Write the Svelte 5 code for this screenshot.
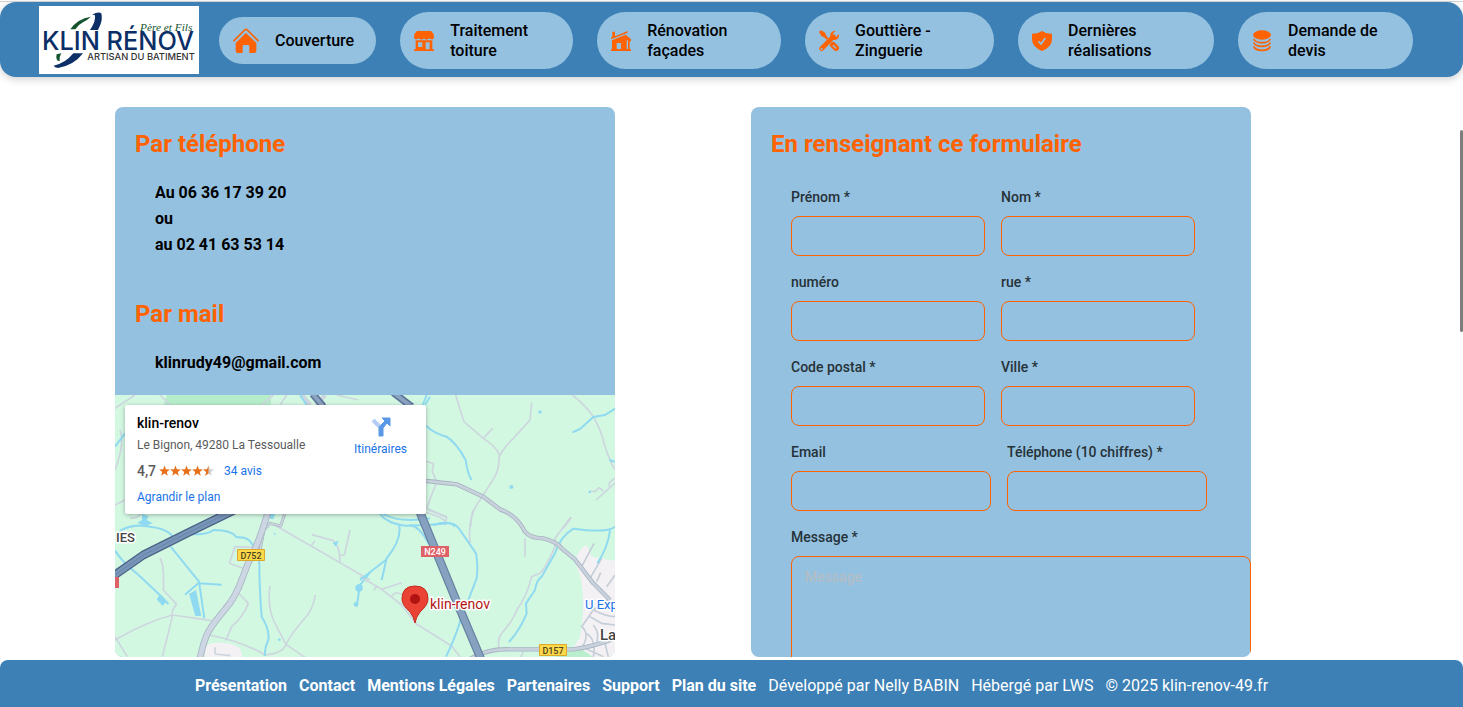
<script>
  const menu = [
    { label: 'Couverture', icon: 'home' },
    { label: 'Traitement toiture', icon: 'store' },
    { label: 'Rénovation façades', icon: 'house' },
    { label: 'Gouttière - Zinguerie', icon: 'tools' },
    { label: 'Dernières réalisations', icon: 'shield' },
    { label: 'Demande de devis', icon: 'coins' }
  ];
  const rows = [
    [{ id: 'prenom', label: 'Prénom *' }, { id: 'nom', label: 'Nom *' }],
    [{ id: 'numero', label: 'numéro' }, { id: 'rue', label: 'rue *' }],
    [{ id: 'cp', label: 'Code postal *' }, { id: 'ville', label: 'Ville *' }],
    [{ id: 'email', label: 'Email', type: 'email' }, { id: 'tel', label: 'Téléphone (10 chiffres) *', type: 'tel' }]
  ];
  const footerLinks = ['Présentation', 'Contact', 'Mentions Légales', 'Partenaires', 'Support', 'Plan du site'];
  const star = 'M6 0l1.5 4.1 4.4.2-3.4 2.7 1.1 4.2L6 8.8l-3.6 2.4 1.1-4.2L.1 4.3l4.4-.2z';
</script>

<div class="page">
  <header>
    <a class="logo" href="#accueil" aria-label="Klin Rénov">
      <svg viewBox="117 18 480 204" width="160" height="68">
        <rect x="117" y="18" width="480" height="204" fill="#fff" />
        <path d="M211 88Q232 56 273 50Q262 60 250 66Q236 73 226 88Z" fill="#14532d" />
        <path d="M277 44Q294 34 304 40Q308 58 301 74L294 90L270 90Q288 64 285 46Z" fill="#0b2f66" />
        <path d="M170 163L184 160Q176 172 179 184L171 181Q167 172 170 163Z" fill="#14532d" />
        <path d="M220 160L249 160Q222 196 174 204Q164 203 161 197Q196 190 220 160Z" fill="#0b2f66" />
        <text x="126" y="150" class="brand">KLIN RÉNOV</text>
        <text x="262" y="179" class="trade">ARTISAN DU BATIMENT</text>
        <text x="420" y="92" class="script">Père et Fils</text>
      </svg>
    </a>
    <nav>
      {#each menu as item}
        <a class="pill" href="#{item.icon}">
          {#if item.icon === 'home'}
            <svg width="26" height="26" viewBox="0 0 78 78">
              <path d="M3 38L35 6q4-4 8 0L75 38" fill="none" stroke="#ff6200" stroke-width="5" stroke-linecap="round" />
              <path d="M39 15L70 45V68q0 7-7 7H49V54q0-3-3-3H32q-3 0-3 3V75H15q-7 0-7-7V45Z" fill="#ff6200" />
            </svg>
          {:else if item.icon === 'store'}
            <svg width="20" height="20" viewBox="0 0 60 60" fill="#ff6200">
              <path d="M9 0H51Q60 7 60 17Q60 25 53 25Q48 25 45 22Q41 26 37 26Q33 26 30 22Q27 26 23 26Q18 26 15 22Q12 25 7 25Q0 25 0 17Q0 7 9 0Z" />
              <path fill-rule="evenodd" d="M5 28H55V55H60V60H0V55H5ZM12 34V48H25V34ZM35 34V55H47V34Z" />
            </svg>
          {:else if item.icon === 'house'}
            <svg width="20" height="20" viewBox="0 0 60 60" fill="#ff6200">
              <path d="M4 2H12V16L50 0V5L1 25V19L4 18Z" />
              <path fill-rule="evenodd" d="M3 28L44 11L60 25V31H56V55H60V60H0V55H3ZM17 36V54H30V36ZM47 28V54H51V28Z" />
            </svg>
          {:else if item.icon === 'tools'}
            <svg width="20" height="22" viewBox="0 0 60 66">
              <path d="M1 5L7 2L18 9L20 16L27 24L23 28L15 20L8 18Z" fill="#ff6200" stroke="#ff6200" stroke-width="2" stroke-linejoin="round" />
              <path d="M42 45L51 54" stroke="#ff6200" stroke-width="18" stroke-linecap="round" />
              <path d="M8 56L43 20" stroke="#ff6200" stroke-width="14" stroke-linecap="round" />
              <path d="M50 2Q37 2 34 13Q33 28 44 30Q57 31 60 17V12L51 21L43 19L41 11Z" fill="#ff6200" />
              <circle cx="8" cy="57" r="3" fill="#94c1e0" />
              <path d="M42 46L51 55" stroke="#94c1e0" stroke-width="4" />
            </svg>
          {:else if item.icon === 'shield'}
            <svg width="20" height="20" viewBox="0 0 60 60">
              <path d="M30 0Q42 9 60 8V25Q60 48 30 60Q0 48 0 25V8Q18 9 30 0Z" fill="#ff6200" />
              <path d="M19 31L27 39L40 21" fill="none" stroke="#94c1e0" stroke-width="5" />
            </svg>
          {:else}
            <svg width="20" height="22" viewBox="0 0 60 66" fill="none" stroke="#ff6200" stroke-width="5">
              <ellipse cx="30" cy="15" rx="27" ry="14" fill="#ff6200" stroke="none" />
              <path d="M5 27Q10 38 30 38Q50 38 55 27M5 38Q10 49 30 49Q50 49 55 38M5 49Q10 61 30 61Q50 61 55 49" />
            </svg>
          {/if}
          <span>{item.label}</span>
        </a>
      {/each}
    </nav>
  </header>

  <main>
    <section class="card">
      <div class="contact">
        <h2>Par téléphone</h2>
        <p>Au 06 36 17 39 20<br />ou<br />au 02 41 63 53 14</p>
        <h2>Par mail</h2>
        <p>klinrudy49@gmail.com</p>
      </div>
      <div class="map">
        <svg class="plan" viewBox="0 0 500 262" preserveAspectRatio="xMinYMin slice" fill="none" stroke-linejoin="round">
          <rect width="500" height="262" fill="#d3f8e2" />
          <path d="M52 0L48 12H156V0Z" fill="#b5edca" />
          <!-- north-west -->
          <g transform="translate(-5 -5) scale(.33333)">
            <g stroke="#cdd6de" stroke-width="5">
              <path d="M15 55L75 15M150 15L180 45M490 15L455 45M530 15L510 45M745 30L680 15M15 240Q45 160 30 120M45 350Q75 345 80 372M15 345L45 330" />
              <path d="M575 15L600 45M645 15L620 45" stroke-width="14" />
            </g>
            <path d="M15 170L45 130M570 15L590 45M950 15L938 45M820 372Q870 400 960 385" stroke="#8fdaf0" stroke-width="6" />
            <g stroke="#5d7399" stroke-width="22">
              <path d="M608 12L640 50M850 8L905 50" />
            </g>
            <g stroke="#8ba3c1" stroke-width="12">
              <path d="M608 12L640 50M850 8L905 50" />
            </g>
          </g>
          <!-- south-west -->
          <g transform="translate(-5 115) scale(.33333)">
            <path d="M285 441V412Q300 395 340 398Q398 402 396 441Z" fill="#f3f1f3" />
            <g stroke="#cdd6de" stroke-width="5">
              <path d="M478 36L520 60L780 210M150 145Q163 160 160 240L200 283Q183 300 187 320L157 440M15 390Q110 335 187 315L305 332M15 380L52 440M388 252L415 280Q400 320 365 350L347 392M297 375Q400 395 465 435Q520 430 528 403Q545 370 580 330Q610 300 616 255M528 403L585 442M480 228Q470 300 500 350L528 403M605 74L670 92Q690 110 690 155M690 135H703L720 60M615 92L603 108M358 160L375 110L430 112M358 160L400 175M60 25L80 22L110 0" />
              <path d="M315 412V432M315 432L362 437" />
            </g>
            <g stroke="#8fdaf0" stroke-width="6">
              <path d="M30 62Q70 40 120 50Q165 55 185 75L190 98L245 72Q290 76 310 60Q350 60 370 72L380 82Q415 78 428 105Q452 130 448 190Q450 260 455 320Q480 360 475 390Q465 410 464 438M182 110L267 215L283 325M225 254L265 220L335 224M15 122Q40 160 80 190L155 260L175 282M780 187L750 225L740 290" />
            </g>
            <g fill="#8fdaf0">
              <path d="M96 12L116 18L110 30L128 40L105 48L82 38L96 30ZM480 12H495L490 28L480 26ZM237 252L258 240L274 318H256ZM148 256L168 276L158 288L140 268ZM668 98L686 92L678 110ZM490 66L498 72L494 76Z" />
              <circle cx="747" cy="234" r="11" /><circle cx="738" cy="283" r="7" /><circle cx="508" cy="389" r="4" />
            </g>
            <path d="M524 12L512 48L480 40L462 60L448 130" stroke="#a9b4c3" stroke-width="9" />
            <path d="M524 12L512 48L480 40L462 60L448 130" stroke="#cdd6de" stroke-width="5" />
            <path d="M476 0L455 65Q440 110 415 158L395 210Q375 265 345 298Q310 340 295 365Q280 395 270 445" stroke="#a9b4c3" stroke-width="20" />
            <path d="M476 0L455 65Q440 110 415 158L395 210Q375 265 345 298Q310 340 295 365Q280 395 270 445" stroke="#cdd6e3" stroke-width="15" />
            <path d="M0 205L100 135L230 70L390 -8" stroke="#4e6488" stroke-width="26" />
            <path d="M0 205L100 135L230 70L390 -8" stroke="#7896b8" stroke-width="18" />
            <path d="M0 205L100 135L230 70L390 -8" stroke="#6785ab" stroke-width="3" />
          </g>
          <!-- north-east -->
          <g transform="translate(305 -10) scale(.33333)">
            <g stroke="#cdd6de" stroke-width="5">
              <path d="M107 30Q122 80 132 110L190 160Q230 185 238 210Q238 250 225 275L180 345Q150 385 153 425M190 160L218 130M238 215Q250 190 280 160L330 105L335 52M458 30Q500 65 520 95Q545 140 552 175Q570 235 590 260M590 275L568 293V305M590 290L528 345M550 318L538 308L525 320L512 318M18 228L40 236L37 260L50 290Q35 330 20 370L80 395L75 420M455 397L430 430" />
            </g>
            <path d="M18 122Q40 145 80 155Q110 175 137 225Q142 265 155 285M457 142L480 132L520 96L555 90L590 68M568 225L590 232M30 35L15 60M38 420Q90 405 105 425" stroke="#8fdaf0" stroke-width="6" />
            <g fill="#8fdaf0"><circle cx="360" cy="81" r="5" /><circle cx="274" cy="306" r="6" /><circle cx="509" cy="321" r="4" /></g>
          </g>
          <!-- south-east -->
          <g transform="translate(245 115) scale(.33333)">
            <path d="M645 155Q655 115 680 105L695 140L765 152V445H620L660 380Q685 240 645 155Z" fill="#f3f1f3" />
            <path d="M590 420H668L700 441H590Z" fill="#b9efcd" />
            <g stroke="#cdd6de" stroke-width="5">
              <path d="M0 200L65 238L125 285L170 343L275 408L300 440M65 238L125 218M95 258Q110 240 125 255M42 242L50 228M340 0Q325 40 330 100M205 0L260 22M632 22L585 85V110Q560 170 540 190L515 200Q500 260 470 300Q460 330 425 370Q410 390 418 415M495 85V140M490 425L483 441M180 0L240 22L258 35" />
              <path d="M665 170L702 100M690 205L725 145M710 215L722 188M740 230L765 195M750 265L700 300L665 350Q690 370 668 410M700 300Q740 320 765 320M690 320L725 340L765 345M680 370Q710 390 700 441M665 410L730 440M735 400L745 441M700 345Q720 370 710 395" stroke="#c5ced8" />
            </g>
            <path d="M60 12Q85 42 135 47L205 45L265 40Q285 38 300 60L348 130Q355 170 350 205L325 270L300 335Q285 385 258 440M118 47Q125 90 80 145L65 210M80 148L0 210M150 45Q180 50 205 100M765 50Q740 70 640 56Q600 80 585 130L545 200Q530 210 525 240L498 280L500 310Q480 360 447 396M750 60Q745 110 712 160" stroke="#8fdaf0" stroke-width="6" />
            <circle cx="0" cy="233" r="8" fill="#8fdaf0" />
            <path d="M198 -87Q250 -82 290 -77L370 -40L420 -2Q470 15 495 65Q510 85 550 85Q590 95 605 115L645 148L700 220L750 270M325 450Q380 415 450 418H640Q700 410 765 385" stroke="#a9b4c3" stroke-width="13" />
            <path d="M198 -87Q250 -82 290 -77L370 -40L420 -2Q470 15 495 65Q510 85 550 85Q590 95 605 115L645 148L700 220L750 270M325 450Q380 415 450 418H640Q700 410 765 385" stroke="#c8d2dc" stroke-width="8" />
            <path d="M170 -20L182 12Q230 130 290 275L362 445" stroke="#66809f" stroke-width="26" />
            <path d="M170 -20L182 12Q230 130 290 275L362 445" stroke="#87a1c0" stroke-width="19" />
          </g>
          <!-- road shields -->
          <rect x="122.500" y="154.500" width="27" height="11" fill="#fdd94a" stroke="#dca92c" />
          <rect x="424.500" y="249.500" width="27" height="11" fill="#fdd94a" stroke="#dca92c" />
          <rect x="306" y="151" width="28" height="11" fill="#de6167" />
          <rect x="0" y="182" width="4" height="11" fill="#de6167" />
          <text x="136" y="164" class="shield">D752</text>
          <text x="438" y="259" class="shield">D157</text>
          <text x="320" y="160" class="shield light">N249</text>
          <text x="1" y="147" class="place small">IES</text>
          <text x="470" y="214" class="shop">U Exp</text>
          <text x="485" y="245" class="place">La</text>
          <text x="315" y="214" class="marker">klin-renov</text>
          <!-- pin -->
          <path d="M300 228Q299 222 295 217Q287 210 287 204Q287 191 300 191Q313 191 313 204Q313 210 305 217Q301 222 300 228Z" fill="#ea4335" stroke="#c5291f" stroke-width="1" />
          <circle cx="300" cy="204" r="5" fill="#b11313" />
        </svg>
        <div class="info">
          <div class="place-details">
            <strong>klin-renov</strong>
            <span class="address">Le Bignon, 49280 La Tessoualle</span>
            <span class="rating">
              <b>4,7</b>
              <svg width="55" height="12" viewBox="0 0 60 12">
                {#each [0, 1, 2, 3] as n}
                  <path d={star} fill="#e7711b" transform="translate({n * 12} 0)" />
                {/each}
                <path d={star} fill="#cfcfcf" transform="translate(48 0)" />
                <path d="M54 0V8.800L50.400 11.200L51.500 7L48.100 4.300L52.500 4.100Z" fill="#e7711b" />
              </svg>
              <a href="#avis">34 avis</a>
            </span>
            <a href="#plan">Agrandir le plan</a>
          </div>
          <a class="route" href="#itineraires">
            <svg width="22" height="22" viewBox="0 0 22 22">
              <path d="M3 4L10 11" stroke="#b4cef6" stroke-width="4" />
              <path d="M9 20V13Q9 11 10 10L15 5L12 2H20V10L17 7L13 12V20Z" fill="#5a98e8" stroke="#5a98e8" />
            </svg>
            Itinéraires
          </a>
        </div>
      </div>
    </section>

    <section class="card">
      <form>
        <h2>En renseignant ce formulaire</h2>
        <div class="fields">
          {#each rows as row, i}
            <div class="row" class:wide={i === 3}>
              {#each row as field}
                <div class="field">
                  <label for={field.id}>{field.label}</label>
                  <input id={field.id} type={field.type ?? 'text'} />
                </div>
              {/each}
            </div>
          {/each}
          <div class="field">
            <label for="message">Message *</label>
            <textarea id="message" placeholder="Message" rows="8"></textarea>
          </div>
        </div>
      </form>
    </section>
  </main>

  <footer>
    {#each footerLinks as link}
      <a href="#{link}">{link}</a>
    {/each}
    <span>Développé par Nelly BABIN</span>
    <span>Hébergé par LWS</span>
    <span>© 2025 klin-renov-49.fr</span>
  </footer>
  <div class="scroll-thumb"></div>
</div>

<style>
  :global(body) {
    font-family: Roboto, sans-serif;
    background: #fff;
  }
  .page, .page * { box-sizing: border-box; }
  .page {
    position: relative;
    display: flex;
    flex-direction: column;
    height: 100vh;
    padding-top: 2px;
    overflow: hidden;
    font-size: 16px;
  }
  a { text-decoration: none; }
  header {
    display: flex;
    align-items: center;
    gap: 20px;
    flex: none;
    padding: 4px 50px 3px 39px;
    background: #3d80b5;
    border-radius: 16px;
    box-shadow: 0 2px 8px rgba(0, 0, 0, 0.2);
  }
  .page::before {
    content: '';
    position: absolute;
    top: 1px;
    left: 0;
    right: 0;
    height: 1px;
    background: #d0d0d0;
  }
  .logo, .logo svg { display: block; flex: none; }
  .brand { font: 500 76px Inter, sans-serif; fill: #0b2f66; }
  .trade { font: 500 28px Inter, sans-serif; fill: #333; }
  .script { font: italic 34px 'Liberation Serif', serif; fill: #14532d; }
  nav {
    flex: 1;
    display: grid;
    grid-template-columns: 157fr 173fr 184fr 189fr 196fr 175fr;
    gap: 24px;
    align-items: center;
  }
  .pill {
    display: flex;
    align-items: center;
    gap: 16px;
    min-height: 47px;
    padding: 9px 22px 8px 14px;
    border-radius: 30px;
    background: #94c1e0;
    color: #000;
    font-weight: 500;
    line-height: 20px;
  }
  .pill svg { flex: none; }
  main {
    flex: 1;
    min-height: 0;
    display: flex;
    justify-content: space-between;
    padding: 30px 212px 3px 115px;
  }
  .card {
    display: flex;
    flex-direction: column;
    flex: 0 1 500px;
    min-width: 0;
    overflow: hidden;
    border-radius: 8px;
    background: #94c1e0;
  }
  h2 {
    margin: 0;
    font-size: 24px;
    font-weight: 700;
    line-height: 34px;
    color: #ff6200;
  }
  .contact { padding: 20px 20px 19px; flex: none; }
  .contact p {
    margin: 19px 20px 0;
    font-weight: 700;
    line-height: 26px;
    color: #000;
  }
  .contact p + h2 { margin-top: 39px; }
  .map {
    position: relative;
    flex: 1;
    min-height: 0;
  }
  .plan { display: block; width: 100%; height: 100%; }
  .shield { font: 500 9px Roboto, sans-serif; fill: #4a4220; text-anchor: middle; }
  .light { fill: #fff; }
  .place, .shop, .marker { paint-order: stroke; stroke: #fff; stroke-width: 3px; }
  .place { font: 500 15px Roboto, sans-serif; fill: #444; }
  .small { font-size: 13px; }
  .shop { font: 400 13px Roboto, sans-serif; fill: #1a73e8; }
  .marker { font: 400 14px Roboto, sans-serif; fill: #b31412; }
  .info {
    position: absolute;
    top: 10px;
    left: 10px;
    display: flex;
    justify-content: space-between;
    width: 301px;
    padding: 8px 19px 7px 12px;
    background: #fff;
    border-radius: 2px;
    box-shadow: 0 1px 4px rgba(0, 0, 0, 0.3);
    font-size: 12px;
    color: #5b5b5b;
  }
  .info a { color: #1a73e8; }
  .place-details { display: flex; flex-direction: column; line-height: 20px; gap: 4px; }
  .place-details strong { font-size: 14px; font-weight: 500; color: #000; }
  .rating { display: flex; align-items: center; gap: 3px; line-height: 24px; }
  .rating b { font-size: 14px; font-weight: 500; }
  .rating a { margin-left: 7px; }
  .address { margin-top: -2px; }
  .route {
    display: flex;
    flex-direction: column;
    align-items: center;
    gap: 4px;
    padding-top: 3px;
    line-height: 14px;
  }
  form { padding: 20px 0 0 20px; }
  .fields {
    display: flex;
    flex-direction: column;
    gap: 16px;
    padding: 26px 0 0 20px;
  }
  .row {
    display: grid;
    grid-template-columns: 1fr 1fr;
    gap: 16px;
    padding-right: 56px;
  }
  .row.wide { padding-right: 44px; }
  .field { display: flex; flex-direction: column; gap: 8px; min-width: 0; }
  label {
    font-size: 14px;
    font-weight: 500;
    line-height: 21px;
    color: #263238;
  }
  input, textarea {
    width: 100%;
    margin: 0;
    padding: 9px 13px;
    border: 1px solid #ff6200;
    border-radius: 8px;
    background: transparent;
    font: 400 14px/22px Roboto, sans-serif;
    color: #263238;
    outline: none;
  }
  input { height: 40px; }
  textarea { display: block; resize: none; }
  textarea::placeholder { color: #b8bdc2; }
  footer {
    flex: none;
    display: flex;
    justify-content: center;
    gap: 12px;
    padding: 14px 16px 9px;
    background: #3d80b5;
    border-radius: 8px 8px 0 0;
    color: #fff;
    line-height: 24px;
  }
  footer a { color: #fff; font-weight: 700; }
  .scroll-thumb {
    position: absolute;
    top: 130px;
    right: 0;
    width: 3px;
    height: 202px;
    background: #7d7d7d;
    border-radius: 2px;
  }
</style>
